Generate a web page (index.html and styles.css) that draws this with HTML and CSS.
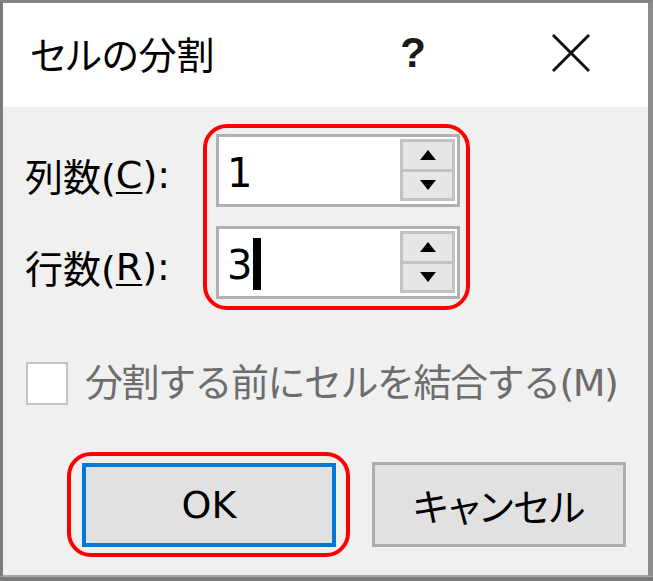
FILE: index.html
```html
<!DOCTYPE html>
<html lang="ja">
<head>
<meta charset="utf-8">
<title>セルの分割</title>
<link rel="stylesheet" href="styles.css">
</head>
<body>
<div class="window">
  <div class="titlebar">
    <span class="title">セルの分割</span>
    <span class="help">?</span>
    <span class="close">
      <svg width="40" height="40" viewBox="0 0 40 40"><path d="M2 2 L38 38 M38 2 L2 38" stroke="#111" stroke-width="3" fill="none"/></svg>
    </span>
  </div>
  <div class="content">
    <div class="fields">
      <div class="labels">
        <div class="label">列数(<span class="ul">C</span>):</div>
        <div class="label">行数(<span class="ul">R</span>):</div>
      </div>
      <div class="highlight spin-group">
        <div class="spin">
          <div class="spin-value">1</div>
          <div class="spin-buttons">
            <div class="spin-btn"><span class="tri-up"></span></div>
            <div class="spin-btn"><span class="tri-down"></span></div>
          </div>
        </div>
        <div class="spin">
          <div class="spin-value">3<span class="caret"></span></div>
          <div class="spin-buttons">
            <div class="spin-btn"><span class="tri-up"></span></div>
            <div class="spin-btn"><span class="tri-down"></span></div>
          </div>
        </div>
      </div>
    </div>
    <div class="check-row">
      <span class="checkbox"></span>
      <span class="check-label">分割する前にセルを結合する(M)</span>
    </div>
    <div class="button-row">
      <div class="highlight ok-wrap">
        <div class="btn btn-default">OK</div>
      </div>
      <div class="btn btn-cancel">キャンセル</div>
    </div>
  </div>
</div>
</body>
</html>
```

FILE: styles.css
```css
html, body {
  margin: 0;
  padding: 0;
}
body {
  width: 653px;
  height: 581px;
  overflow: hidden;
  background: #7a7a7a;
  font-family: "DejaVu Sans", "Noto Sans CJK JP", sans-serif;
  color: #000;
}
.window {
  box-sizing: border-box;
  width: 653px;
  height: 577px;
  border-left: 3px solid #7c7c7c;
  border-top: 3px solid #848484;
  border-right: 5px solid #8c8c8c;
  border-bottom: 2px solid #a6a6a6;
  background: #f0f0f0;
  display: flex;
  flex-direction: column;
}
.titlebar {
  height: 104px;
  flex-shrink: 0;
  background: #fff;
  display: flex;
  align-items: center;
}
.title {
  margin-left: 27px;
  font-family: "Noto Sans CJK JP", sans-serif;
  font-size: 38px;
  font-feature-settings: "palt";
  line-height: 1;
  margin-top: -4px;
}
.help {
  margin-left: auto;
  width: 40px;
  text-align: center;
  font-family: "Liberation Sans", sans-serif;
  font-size: 42px;
  font-weight: bold;
  color: #1a1a1a;
  line-height: 1;
  margin-top: -4px;
}
.close {
  width: 40px;
  height: 40px;
  margin-left: 118px;
  margin-right: 57px;
  margin-top: -4px;
  display: flex;
}
.content {
  padding: 17px 0 0 22px;
  display: flex;
  flex-direction: column;
}
.fields {
  display: flex;
}
.labels {
  width: 178px;
  padding-top: 10px;
  display: flex;
  flex-direction: column;
  gap: 19px;
}
.label {
  height: 73px;
  display: flex;
  align-items: center;
  font-size: 38px;
  padding-top: 8px;
  box-sizing: border-box;
}
.ul {
  text-decoration: underline;
  text-decoration-thickness: 2px;
  text-underline-offset: 4px;
}
.highlight {
  border: 4px solid #ff0000;
  border-radius: 24px;
}
.spin-group {
  padding: 6px 6px 7px 9px;
  display: flex;
  flex-direction: column;
  gap: 19px;
}
.spin {
  box-sizing: border-box;
  width: 244px;
  height: 73px;
  border: 3px solid #b0b0b0;
  background: #fff;
  display: flex;
  align-items: stretch;
}
.spin-value {
  flex: 1;
  padding-left: 8px;
  display: flex;
  align-items: center;
  font-size: 40px;
  padding-top: 4px;
}
.caret {
  display: inline-block;
  width: 8px;
  height: 52px;
  background: #000;
  margin-left: 1px;
  margin-top: -2px;
}
.spin-buttons {
  box-sizing: border-box;
  width: 55px;
  margin: 2px 2px 3px 0;
  border: 3px solid #c2c2c2;
  background: #c2c2c2;
  display: flex;
  flex-direction: column;
  gap: 3px;
}
.spin-btn {
  flex: 1;
  background: #e6e6e6;
  display: flex;
  align-items: center;
  justify-content: center;
}
.tri-up {
  width: 0;
  height: 0;
  border-left: 8px solid transparent;
  border-right: 8px solid transparent;
  border-bottom: 10px solid #000;
}
.tri-down {
  width: 0;
  height: 0;
  border-left: 8px solid transparent;
  border-right: 8px solid transparent;
  border-top: 10px solid #000;
}
.check-row {
  margin-top: 51px;
  height: 44px;
  display: flex;
  align-items: center;
}
.checkbox {
  box-sizing: border-box;
  width: 42px;
  height: 43px;
  margin-left: 1px;
  background: #fff;
  border: 2px solid #c4c4c4;
}
.check-label {
  margin-left: 17px;
  font-size: 38px;
  color: #6d6d6d;
  letter-spacing: -1.5px;
  line-height: 1;
}
.button-row {
  margin-top: 47px;
  padding-left: 42px;
  display: flex;
  align-items: center;
  gap: 22px;
}
.ok-wrap {
  padding: 7px 10px 6px 11px;
}
.btn {
  box-sizing: border-box;
  width: 254px;
  background: #e1e1e1;
  display: flex;
  align-items: center;
  justify-content: center;
  font-size: 38px;
  font-family: "DejaVu Sans", "Noto Sans CJK JP", sans-serif;
}
.btn-default {
  height: 84px;
  border: 4px solid #0078d7;
}
.btn-cancel {
  height: 85px;
  border: 3px solid #adadad;
  font-feature-settings: "palt";
}
```
